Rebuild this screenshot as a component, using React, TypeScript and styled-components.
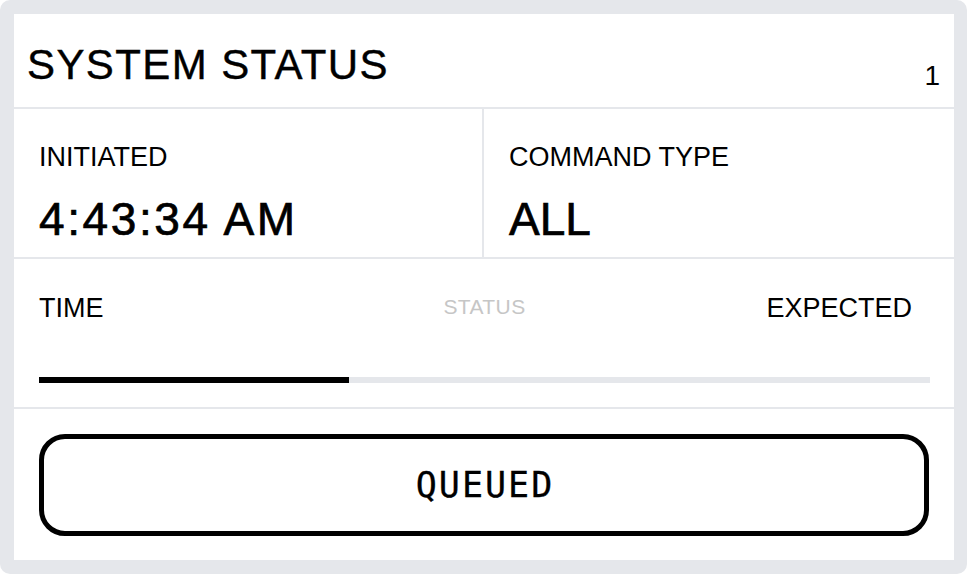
import React from "react";
import styled, { createGlobalStyle } from "styled-components";

const Global = createGlobalStyle`
  html, body { margin: 0; padding: 0; background: #ffffff; }
  body { font-family: "Liberation Sans", Arial, sans-serif; color: #000; }
  * { box-sizing: border-box; }
`;

const Frame = styled.div`
  width: 967px;
  height: 574px;
  background: #e5e7eb;
  border-radius: 10px;
  padding: 14px 13px 14px 14px;
  display: grid;
  grid-template-rows: 93px 148px 148px 1fr;
  gap: 2px;
`;

const Panel = styled.div`
  background: #ffffff;
`;

const Header = styled(Panel)`
  display: flex;
  justify-content: space-between;
  align-items: flex-start;
  padding: 30px 14px 0 13px;
`;

const Title = styled.h1`
  margin: 0;
  font-family: "Liberation Sans", Arial, sans-serif;
  font-size: 42px;
  line-height: 42px;
  font-weight: 400;
  letter-spacing: 1.4px;
  -webkit-text-stroke: 0.4px #000;
  color: #000;
`;

const Count = styled.span`
  align-self: flex-end;
  margin-bottom: 17px;
  font-size: 28px;
  line-height: 28px;
  color: #000;
`;

const InfoRow = styled.div`
  display: grid;
  grid-template-columns: 468px 1fr;
  gap: 2px;
`;

const InfoCell = styled(Panel)`
  display: flex;
  flex-direction: column;
  gap: 25px;
  padding: 35px 25px 0 25px;
`;

const Label = styled.div`
  font-family: "Liberation Sans", Arial, sans-serif;
  font-size: 27px;
  line-height: 27px;
  color: #000;
`;

const Value = styled.div<{ $tracking?: number }>`
  font-family: "Liberation Sans", Arial, sans-serif;
  font-size: 46px;
  line-height: 46px;
  font-weight: 400;
  letter-spacing: ${(p) => p.$tracking ?? 0}px;
  -webkit-text-stroke: 0.7px #000;
  color: #000;
`;

const ProgressPanel = styled(Panel)`
  display: flex;
  flex-direction: column;
  padding: 36px 24px 0 25px;
`;

const ScaleLabels = styled.div`
  display: grid;
  grid-template-columns: 1fr auto 1fr;
  align-items: start;
`;

const StatusHint = styled.span`
  font-size: 21px;
  line-height: 21px;
  letter-spacing: 0.4px;
  color: #c6c6c6;
  padding-top: 1px;
`;

const EndLabel = styled(Label)`
  justify-self: end;
  padding-right: 18px;
`;

const Track = styled.div`
  margin-top: 55px;
  height: 6px;
  background: #e5e7eb;
`;

const Fill = styled.div`
  height: 100%;
  background: #000;
`;

const ActionPanel = styled(Panel)`
  padding: 25px 25px 24px 25px;
  display: flex;
`;

const StateButton = styled.button`
  flex: 1;
  background: #fff;
  border: 5px solid #000;
  border-radius: 26px;
  font-family: "DejaVu Sans Mono", "Liberation Mono", monospace;
  font-size: 35px;
  letter-spacing: 2px;
  -webkit-text-stroke: 0.3px #000;
  color: #000;
  cursor: pointer;
  display: flex;
  align-items: center;
  justify-content: center;
  padding: 0 0 0 2px;
`;

export default function App() {
  const progress = 34.75;
  return (
    <>
      <Global />
      <Frame>
        <Header>
          <Title>SYSTEM STATUS</Title>
          <Count>1</Count>
        </Header>
        <InfoRow>
          <InfoCell>
            <Label>INITIATED</Label>
            <Value $tracking={2.6}>4:43:34 AM</Value>
          </InfoCell>
          <InfoCell>
            <Label>COMMAND TYPE</Label>
            <Value>ALL</Value>
          </InfoCell>
        </InfoRow>
        <ProgressPanel>
          <ScaleLabels>
            <Label>TIME</Label>
            <StatusHint>STATUS</StatusHint>
            <EndLabel>EXPECTED</EndLabel>
          </ScaleLabels>
          <Track>
            <Fill style={{ width: `${progress}%` }} />
          </Track>
        </ProgressPanel>
        <ActionPanel>
          <StateButton>QUEUED</StateButton>
        </ActionPanel>
      </Frame>
    </>
  );
}
